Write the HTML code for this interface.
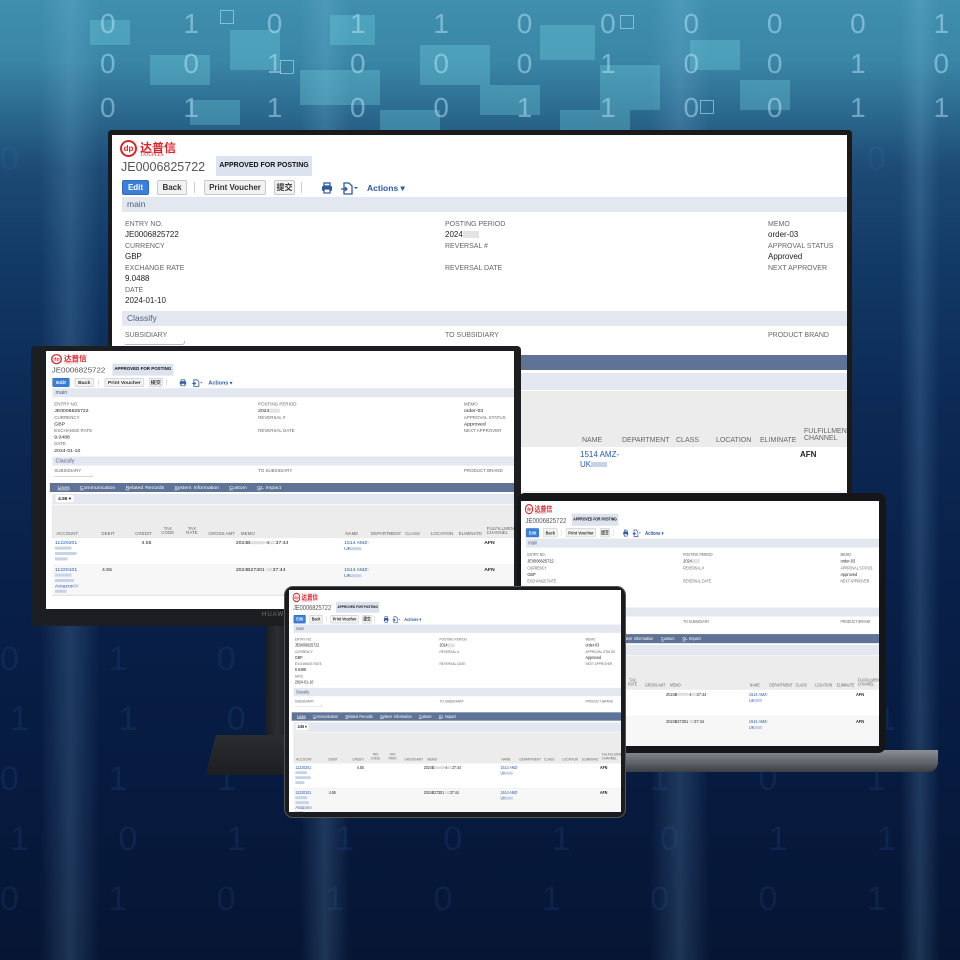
<!DOCTYPE html>
<html><head><meta charset="utf-8">
<style>
*{margin:0;padding:0;box-sizing:border-box}
body{width:960px;height:960px;overflow:hidden;position:relative;font-family:"Liberation Sans","Noto Sans CJK SC",sans-serif;
background:linear-gradient(180deg,#3f8fae 0px,#3a86a6 60px,#2c6b90 110px,#1c4a74 170px,#123a66 260px,#0c2a55 400px,#081f48 600px,#071a3e 800px,#061533 960px)}
.bgl{position:absolute;left:0;top:0;width:960px;height:960px;overflow:hidden}
.streak{position:absolute;top:0;height:960px;background:linear-gradient(90deg,rgba(140,200,240,0),rgba(140,200,240,.18),rgba(140,200,240,0))}
.sq{position:absolute;background:rgba(120,220,230,.3)}
.sqo{position:absolute;border:1px solid rgba(170,230,240,.6)}
.dg{position:absolute;font-family:"Liberation Sans",sans-serif;color:rgba(200,240,255,.45);font-size:28px;letter-spacing:30px;white-space:nowrap}
.dgl{position:absolute;font-family:"Liberation Sans",sans-serif;color:rgba(60,110,200,.14);font-size:34px;letter-spacing:40px;white-space:nowrap}
.dev{position:absolute;background:#141618;border-radius:4px}
.vp{position:absolute;overflow:hidden;background:#fff}
.scr{position:absolute;left:0;top:0;width:735px;height:420px;background:#fff;transform-origin:0 0;color:#333}
.scr .a{position:absolute;white-space:nowrap}
.lb{font-size:7px;color:#666;text-transform:uppercase}
.vl{font-size:8px;color:#222}
.bar{position:absolute;left:10px;right:0;height:15px;background:#e3e8f0;font-size:8.5px;color:#4d5f80;padding:2px 5px}
.btn{position:absolute;top:45px;height:15px;border:1px solid #c8c8c8;background:#f2f2f2;border-radius:2px;font-size:8px;font-weight:bold;color:#333;text-align:center;line-height:13px}
.lnk{color:#255aa8}
.blur{display:inline-block;background:#c7d3e6;height:5px;vertical-align:middle}
</style></head><body>
<div class="bgl">
<div class="streak" style="left:40px;width:60px"></div>
<div class="streak" style="left:300px;width:50px"></div>
<div class="streak" style="left:650px;width:60px"></div>
<div class="streak" style="left:900px;width:40px"></div>
<div class="sq" style="left:90px;top:20px;width:40px;height:25px"></div>
<div class="sq" style="left:150px;top:55px;width:60px;height:30px"></div>
<div class="sq" style="left:230px;top:30px;width:50px;height:40px"></div>
<div class="sq" style="left:300px;top:70px;width:80px;height:35px"></div>
<div class="sq" style="left:330px;top:15px;width:45px;height:30px"></div>
<div class="sq" style="left:420px;top:45px;width:70px;height:40px"></div>
<div class="sq" style="left:480px;top:85px;width:60px;height:30px"></div>
<div class="sq" style="left:540px;top:25px;width:55px;height:35px"></div>
<div class="sq" style="left:600px;top:65px;width:60px;height:45px"></div>
<div class="sq" style="left:690px;top:40px;width:50px;height:30px"></div>
<div class="sq" style="left:740px;top:80px;width:50px;height:30px"></div>
<div class="sq" style="left:190px;top:100px;width:50px;height:25px"></div>
<div class="sq" style="left:380px;top:110px;width:60px;height:20px"></div>
<div class="sq" style="left:560px;top:110px;width:70px;height:20px"></div>
<div class="sqo" style="left:220px;top:10px;width:14px;height:14px"></div>
<div class="sqo" style="left:280px;top:60px;width:14px;height:14px"></div>
<div class="sqo" style="left:620px;top:15px;width:14px;height:14px"></div>
<div class="sqo" style="left:700px;top:100px;width:14px;height:14px"></div>
<div class="dg" style="left:100px;top:8px">0 1 0 1 1 0 0 0 0 0 1 0 0</div>
<div class="dg" style="left:100px;top:48px">0 0 1 0 0 0 1 0 0 1 0 0 1</div>
<div class="dg" style="left:100px;top:92px">0 1 1 0 0 1 1 0 0 1 1 1 0</div>
<div class="dgl" style="left:0px;top:140px">0 1 0 0 1 0 1 0 0 1 0 1 0 1 0 0 1</div>
<div class="dgl" style="left:0px;top:640px">0 1 0 0 1 0 1 0 0 1 0 1 0 1 0 0 1</div>
<div class="dgl" style="left:10px;top:700px">1 1 0 1 0 0 0 1 1 0 0 1 1 1 0 1 1</div>
<div class="dgl" style="left:0px;top:760px">0 1 1 0 1 1 1 0 1 1 0 0 1 0 1 0 0</div>
<div class="dgl" style="left:10px;top:820px">1 0 1 1 0 1 0 1 1 0 1 1 0 1 1 1 0</div>
<div class="dgl" style="left:0px;top:880px">0 1 0 1 0 1 0 0 1 0 1 0 0 1 0 0 1</div>
</div>

<div class="dev" style="left:108px;top:130px;width:744px;height:368px;background:#1a1a1a"></div>
<div class="vp" style="left:112px;top:135px;width:735px;height:359px"><div class="scr" id="s0"></div></div>

<div style="position:absolute;left:266px;top:620px;width:22px;height:125px;background:linear-gradient(90deg,#1c1d20,#2c2e32,#1c1d20)"></div>
<div style="position:absolute;left:207px;top:735px;width:90px;height:40px;background:linear-gradient(180deg,#2a2c30,#1d1e21);clip-path:polygon(10% 0,100% 0,100% 100%,0 100%,0 85%)"></div>
<div class="dev" style="left:31px;top:346px;width:490px;height:280px;background:#1d1e21"></div>
<div style="position:absolute;left:262px;top:612px;font-size:6px;color:#777;letter-spacing:1px">HUAWEI</div>
<div class="vp" style="left:46px;top:351px;width:468px;height:258px"><div class="scr" id="s1" style="transform:scale(.637,.6)"></div></div>

<div style="position:absolute;left:510px;top:750px;width:428px;height:22px;background:linear-gradient(180deg,#8a8f96,#5d6168 60%,#3b3e43);border-radius:0 0 10px 10px"></div>
<div class="dev" style="left:517px;top:493px;width:369px;height:260px;border-radius:8px;background:#151619"></div>
<div class="vp" style="left:521px;top:501px;width:358px;height:245px"><div class="scr" id="s2" style="transform:scale(.487,.605)"></div></div>

<div class="dev" style="left:284px;top:586px;width:342px;height:232px;border-radius:9px;background:#1b1c1f;border:1px solid #555"></div>
<div class="vp" style="left:289px;top:590px;width:332px;height:222px"><div class="scr" id="s3" style="transform:scale(.452,.556)"></div></div>

<template id="tpl">
<div class="a" style="left:8px;top:5px;width:17px;height:17px;border:2px solid #d8262b;border-radius:50%;color:#d8262b;font-size:8px;font-weight:bold;text-align:center;line-height:13px">dp</div>
<div class="a" style="left:28px;top:4px;font-size:12px;font-weight:bold;color:#d8262b">达普信</div>
<div class="a" style="left:29px;top:18px;font-size:5px;color:#d8262b;font-family:'Liberation Serif',serif">DOUPLES</div>
<div class="a" style="left:9px;top:25px;font-size:12.5px;color:#555">JE0006825722</div>
<div class="a" style="left:104px;top:21px;width:96px;height:20px;background:#dde3ee;font-size:7px;font-weight:bold;color:#111;padding-top:6px;text-align:center">APPROVED FOR POSTING</div>
<div class="btn" style="left:10px;width:27px;background:#3c7fd9;border-color:#2f6cc0;color:#fff">Edit</div>
<div class="btn" style="left:45px;width:30px">Back</div>
<div class="a" style="left:82px;top:47px;width:1px;height:11px;background:#ccc"></div>
<div class="btn" style="left:92px;width:62px">Print Voucher</div>
<div class="btn" style="left:162px;width:21px">提交</div>
<div class="a" style="left:189px;top:47px;width:1px;height:11px;background:#ccc"></div>
<svg class="a" style="left:209px;top:47px" width="12" height="12" viewBox="0 0 12 12"><rect x="3" y="1" width="6" height="3" fill="none" stroke="#2d5aa0" stroke-width="1.3"/><rect x="1" y="4" width="10" height="5" rx="1" fill="#2d5aa0"/><rect x="3" y="7" width="6" height="4" fill="#fff" stroke="#2d5aa0" stroke-width="1.2"/></svg>
<svg class="a" style="left:228px;top:46px" width="18" height="14" viewBox="0 0 18 14"><path d="M4 2h5l3 3v8H4z" fill="none" stroke="#2d5aa0" stroke-width="1.3"/><path d="M1 8h6M5 6l2 2-2 2" fill="none" stroke="#2d5aa0" stroke-width="1.3"/><path d="M14 6h4l-2 2z" fill="#2d5aa0"/></svg>
<div class="a" style="left:255px;top:48px;font-size:8.5px;font-weight:bold;color:#2d5aa0">Actions ▾</div>
<div class="bar" style="top:62px">main</div>
<div class="a lb" style="left:13px;top:86px">Entry No.</div><div class="a vl" style="left:13px;top:95px">JE0006825722</div>
<div class="a lb" style="left:13px;top:108px">Currency</div><div class="a vl" style="left:13px;top:117px">GBP</div>
<div class="a lb" style="left:13px;top:130px">Exchange Rate</div><div class="a vl" style="left:13px;top:139px">9.0488</div>
<div class="a lb" style="left:13px;top:152px">Date</div><div class="a vl" style="left:13px;top:161px">2024-01-10</div>
<div class="a lb" style="left:333px;top:86px">Posting Period</div><div class="a vl" style="left:333px;top:95px">2024<span class="blur" style="width:16px;height:7px;background:#e3e3e3"></span></div>
<div class="a lb" style="left:333px;top:108px">Reversal #</div>
<div class="a lb" style="left:333px;top:130px">Reversal Date</div>
<div class="a lb" style="left:656px;top:86px">Memo</div><div class="a vl" style="left:656px;top:95px">order-03</div>
<div class="a lb" style="left:656px;top:108px">Approval Status</div><div class="a vl" style="left:656px;top:117px">Approved</div>
<div class="a lb" style="left:656px;top:130px">Next Approver</div>
<div class="bar" style="top:176px">Classify</div>
<div class="a lb" style="left:13px;top:197px">Subsidiary</div>
<div class="a" style="left:13px;top:206px;width:60px;height:4px;border-bottom:1px solid #bbb;border-right:1px solid #bbb;border-radius:0 0 3px 0"></div>
<div class="a lb" style="left:333px;top:197px">To Subsidiary</div>
<div class="a lb" style="left:656px;top:197px">Product Brand</div>
<div class="a" style="left:6px;right:0;top:220px;height:15px;background:#5e7395;font-size:8px;color:#fff;padding:3px 0 0 12px;word-spacing:1px">
<span style="text-decoration:underline">Lines</span>&nbsp;&nbsp;&nbsp;&nbsp;&nbsp;<u>C</u>ommunication&nbsp;&nbsp;&nbsp;&nbsp;&nbsp;<u>R</u>elated Records&nbsp;&nbsp;&nbsp;&nbsp;&nbsp;<u>S</u>ystem Information&nbsp;&nbsp;&nbsp;&nbsp;&nbsp;<u>C</u>ustom&nbsp;&nbsp;&nbsp;&nbsp;&nbsp;<u>G</u>L Impact</div>
<div class="a" style="left:10px;right:0;top:238px;height:17px;background:#e3e8f0"></div>
<div class="a" style="left:15px;top:240px;height:12px;padding:1px 4px;background:#fff;border-radius:2px;font-size:7.5px;font-weight:bold;color:#222">4.55 ▾</div>
<div class="a" style="left:10px;right:0;top:256px;height:56px;background:#ececec;border-left:1px solid #ddd"></div>
<div class="a lb" style="left:16px;top:302px">Account</div>
<div class="a lb" style="left:87px;top:302px">Debit</div>
<div class="a lb" style="left:140px;top:302px">Credit</div>
<div class="a lb" style="left:181px;top:293px;text-align:center">Tax<br>Code</div>
<div class="a lb" style="left:220px;top:293px;text-align:center">Tax<br>Rate</div>
<div class="a lb" style="left:255px;top:302px">Gross Amt</div>
<div class="a lb" style="left:306px;top:302px">Memo</div>
<div class="a lb" style="left:470px;top:302px">Name</div>
<div class="a lb" style="left:510px;top:302px">Department</div>
<div class="a lb" style="left:564px;top:302px">Class</div>
<div class="a lb" style="left:604px;top:302px">Location</div>
<div class="a lb" style="left:648px;top:302px">Eliminate</div>
<div class="a lb" style="left:692px;top:293px">Fulfillment<br>Channel</div>
<div class="a vl lnk" style="left:14px;top:315px;line-height:9px">11220201<br><span class="blur" style="width:26px"></span><br><span class="blur" style="width:34px"></span><br><span class="blur" style="width:20px"></span></div>
<div class="a vl" style="left:150px;top:315px">4.55</div>
<div class="a vl" style="left:298px;top:315px">2024B<span class="blur" style="width:22px;background:#ddd"></span>-4<span class="blur" style="width:8px;background:#ddd"></span>:37:44</div>
<div class="a vl lnk" style="left:468px;top:315px;line-height:10px">1514 AMZ-<br>UK<span class="blur" style="width:16px"></span></div>
<div class="a vl" style="left:688px;top:315px;font-weight:bold">AFN</div>
<div class="a" style="left:10px;right:0;top:356px;height:1px;background:#eee"></div>
<div class="a" style="left:10px;right:0;top:357px;height:48px;background:#f7f7f7"></div>
<div class="a vl lnk" style="left:14px;top:360px;line-height:9px">11220101<br><span class="blur" style="width:26px"></span><br><span class="blur" style="width:30px"></span><br>Amazon<span class="blur" style="width:8px"></span><br><span class="blur" style="width:18px"></span></div>
<div class="a vl" style="left:88px;top:360px">4.55</div>
<div class="a vl" style="left:298px;top:360px">2024B27301 <span class="blur" style="width:8px;background:#ddd"></span>:37:44</div>
<div class="a vl lnk" style="left:468px;top:360px;line-height:10px">1514 AMZ-<br>UK<span class="blur" style="width:16px"></span></div>
<div class="a vl" style="left:688px;top:360px;font-weight:bold">AFN</div>
<div class="a" style="left:10px;right:0;top:406px;height:2px;background:#ddd"></div>
</template>
<script>
var t=document.getElementById('tpl');
for(var i=0;i<4;i++){document.getElementById('s'+i).appendChild(t.content.cloneNode(true));}
</script>
</body></html>
